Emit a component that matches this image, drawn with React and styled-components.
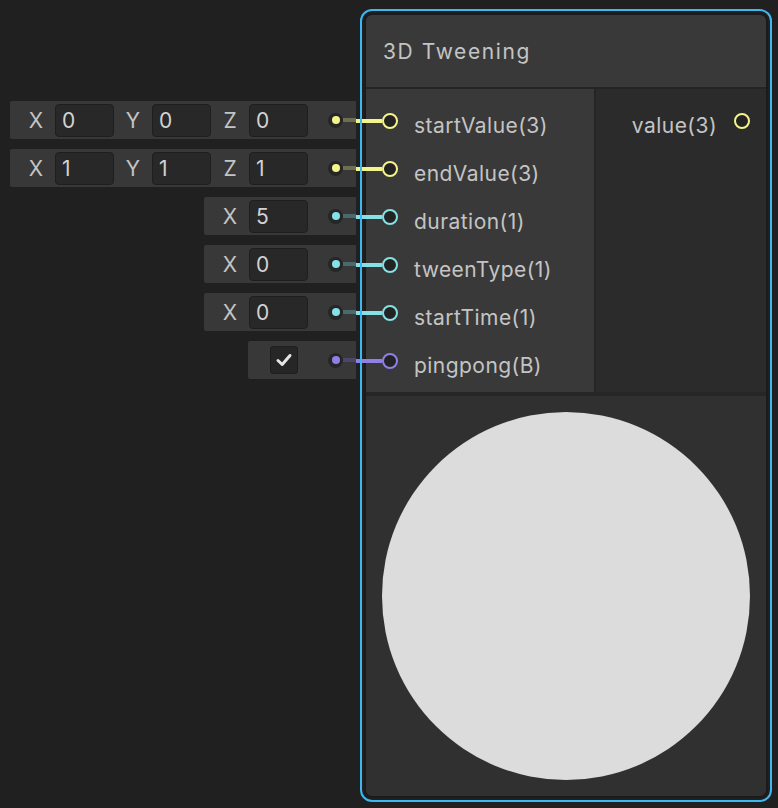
import styled, { createGlobalStyle } from "styled-components";

const GlobalStyle = createGlobalStyle`
  html, body {
    margin: 0;
    padding: 0;
    background: #202020;
  }
  body {
    font-family: Inter, "Noto Sans", sans-serif;
    color: #c4c4c4;
  }
`;

const TYPE_COLORS = {
  vec3: { bright: "#f4f48a", dim: "#6e6e55" },
  float: { bright: "#84e2e6", dim: "#4b6a6c" },
  bool: { bright: "#8f7fe6", dim: "#4c4766" },
};

const inputs = [
  { name: "startValue(3)", type: "vec3", fields: [["X", "0"], ["Y", "0"], ["Z", "0"]] },
  { name: "endValue(3)", type: "vec3", fields: [["X", "1"], ["Y", "1"], ["Z", "1"]] },
  { name: "duration(1)", type: "float", fields: [["X", "5"]] },
  { name: "tweenType(1)", type: "float", fields: [["X", "0"]] },
  { name: "startTime(1)", type: "float", fields: [["X", "0"]] },
  { name: "pingpong(B)", type: "bool", checkbox: true },
];

const Page = styled.div`
  display: flex;
  align-items: flex-start;
  gap: 4px;
  padding-top: 9px;
  height: 808px;
  box-sizing: border-box;
  overflow: hidden;
`;

const Inlines = styled.div`
  width: 356px;
  flex-shrink: 0;
  display: flex;
  flex-direction: column;
  align-items: flex-end;
  gap: 10px;
  padding-top: 92px;
`;

const InlineRow = styled.div`
  height: 38px;
  display: flex;
  align-items: center;
  background: #383838;
  border-radius: 2px 0 0 2px;
  padding-left: ${(p) => (p.$check ? "22px" : "7px")};
  box-sizing: border-box;
`;

const AxisLabel = styled.span`
  width: 38px;
  text-align: center;
  font-size: 21px;
  color: #c4c4c4;
`;

const Field = styled.div`
  width: 59px;
  height: 33px;
  box-sizing: border-box;
  background: #282828;
  border: 1px solid #1e1e1e;
  border-radius: 4px;
  padding-left: 6px;
  display: flex;
  align-items: center;
  font-size: 21px;
  color: #d2d2d2;
`;

const CheckBox = styled.div`
  width: 28px;
  height: 28px;
  box-sizing: border-box;
  background: #262626;
  border: 1px solid #1e1e1e;
  border-radius: 3px;
  display: flex;
  align-items: center;
  justify-content: center;
  margin-right: 30px;
`;

const Connector = styled.div`
  display: flex;
  align-items: center;
  margin-left: ${(p) => (p.$check ? "0" : "20px")};
`;

const Dot = styled.div`
  width: 15px;
  height: 15px;
  border-radius: 50%;
  background: #262626;
  display: flex;
  align-items: center;
  justify-content: center;

  &::after {
    content: "";
    width: 8px;
    height: 8px;
    border-radius: 50%;
    background: ${(p) => p.$color};
  }
`;

const DimWire = styled.div`
  width: 13px;
  height: 4px;
  background: ${(p) => p.$color};
`;

const NodeWrap = styled.div`
  position: relative;
  width: 412px;
  height: 793px;
  padding: 4px;
  box-sizing: border-box;
  flex-shrink: 0;
`;

const SelectionRing = styled.div`
  position: absolute;
  inset: 0;
  border: 2px solid #3db6f2;
  border-radius: 12px;
  pointer-events: none;
  z-index: 3;
`;

const Node = styled.div`
  height: 100%;
  box-sizing: border-box;
  border: 2px solid #1b1b1b;
  border-radius: 8px;
  display: flex;
  flex-direction: column;
  background: #232323;
`;

const Title = styled.div`
  height: 74px;
  flex-shrink: 0;
  background: #393939;
  border-radius: 6px 6px 0 0;
  display: flex;
  align-items: center;
  padding-left: 17px;
  box-sizing: border-box;
  font-size: 21px;
  letter-spacing: 1.6px;
  color: #c4c4c4;
  border-bottom: 2px solid #242424;
`;

const Ports = styled.div`
  display: flex;
  height: 303px;
  flex-shrink: 0;
  border-bottom: 4px solid #262626;
`;

const InputCol = styled.div`
  width: 228px;
  background: #393939;
  border-right: 2px solid #252525;
  padding-top: 8px;
  display: flex;
  flex-direction: column;
`;

const OutputCol = styled.div`
  flex: 1;
  background: #2b2b2b;
  padding-top: 8px;
  display: flex;
  flex-direction: column;
  align-items: flex-end;
`;

const PortRow = styled.div`
  height: 48px;
  display: flex;
  align-items: center;
  gap: ${(p) => (p.$out ? "17px" : "16px")};
  padding: 0 16px;
  flex-direction: ${(p) => (p.$out ? "row-reverse" : "row")};
`;

const Port = styled.div`
  position: relative;
  width: 16px;
  height: 16px;
  box-sizing: border-box;
  border-radius: 50%;
  border: 2px solid ${(p) => p.$color};
  background: #232323;
  flex-shrink: 0;

  ${(p) =>
    p.$wired &&
    `
    &::before {
      content: "";
      position: absolute;
      right: 14px;
      top: 4px;
      width: 26px;
      height: 4px;
      background: ${p.$color};
    }
  `}
`;

const PortLabel = styled.span`
  font-size: 21px;
  letter-spacing: 0.45px;
  color: #c4c4c4;
  padding-top: 8px;
  white-space: nowrap;
`;

const Preview = styled.div`
  flex: 1;
  background: #303030;
  border-radius: 0 0 6px 6px;
  display: flex;
  align-items: center;
  justify-content: center;
`;

const Sphere = styled.div`
  width: 368px;
  height: 368px;
  border-radius: 50%;
  background: #dcdcdc;
`;

function CheckMark() {
  return (
    <svg width="18" height="18" viewBox="0 0 18 18">
      <path
        d="M3 9.5 L7.2 13.5 L15 4.5"
        fill="none"
        stroke="#e6e6e6"
        strokeWidth="3"
        strokeLinecap="round"
        strokeLinejoin="round"
      />
    </svg>
  );
}

function Axis({ axis, value }) {
  return (
    <>
      <AxisLabel>{axis}</AxisLabel>
      <Field>{value}</Field>
    </>
  );
}

export default function App() {
  return (
    <>
      <GlobalStyle />
      <Page>
        <Inlines>
          {inputs.map((inp) => {
            const c = TYPE_COLORS[inp.type];
            return (
              <InlineRow key={inp.name} $check={inp.checkbox}>
                {inp.checkbox ? (
                  <CheckBox>
                    <CheckMark />
                  </CheckBox>
                ) : (
                  inp.fields.map(([axis, val]) => (
                    <Axis key={axis} axis={axis} value={val} />
                  ))
                )}
                <Connector $check={inp.checkbox}>
                  <Dot $color={c.bright} />
                  <DimWire $color={c.dim} />
                </Connector>
              </InlineRow>
            );
          })}
        </Inlines>

        <NodeWrap>
          <SelectionRing />
          <Node>
            <Title>3D Tweening</Title>
            <Ports>
              <InputCol>
                {inputs.map((inp) => (
                  <PortRow key={inp.name}>
                    <Port $color={TYPE_COLORS[inp.type].bright} $wired />
                    <PortLabel>{inp.name}</PortLabel>
                  </PortRow>
                ))}
              </InputCol>
              <OutputCol>
                <PortRow $out>
                  <Port $color={TYPE_COLORS.vec3.bright} />
                  <PortLabel>value(3)</PortLabel>
                </PortRow>
              </OutputCol>
            </Ports>
            <Preview>
              <Sphere />
            </Preview>
          </Node>
        </NodeWrap>
      </Page>
    </>
  );
}
